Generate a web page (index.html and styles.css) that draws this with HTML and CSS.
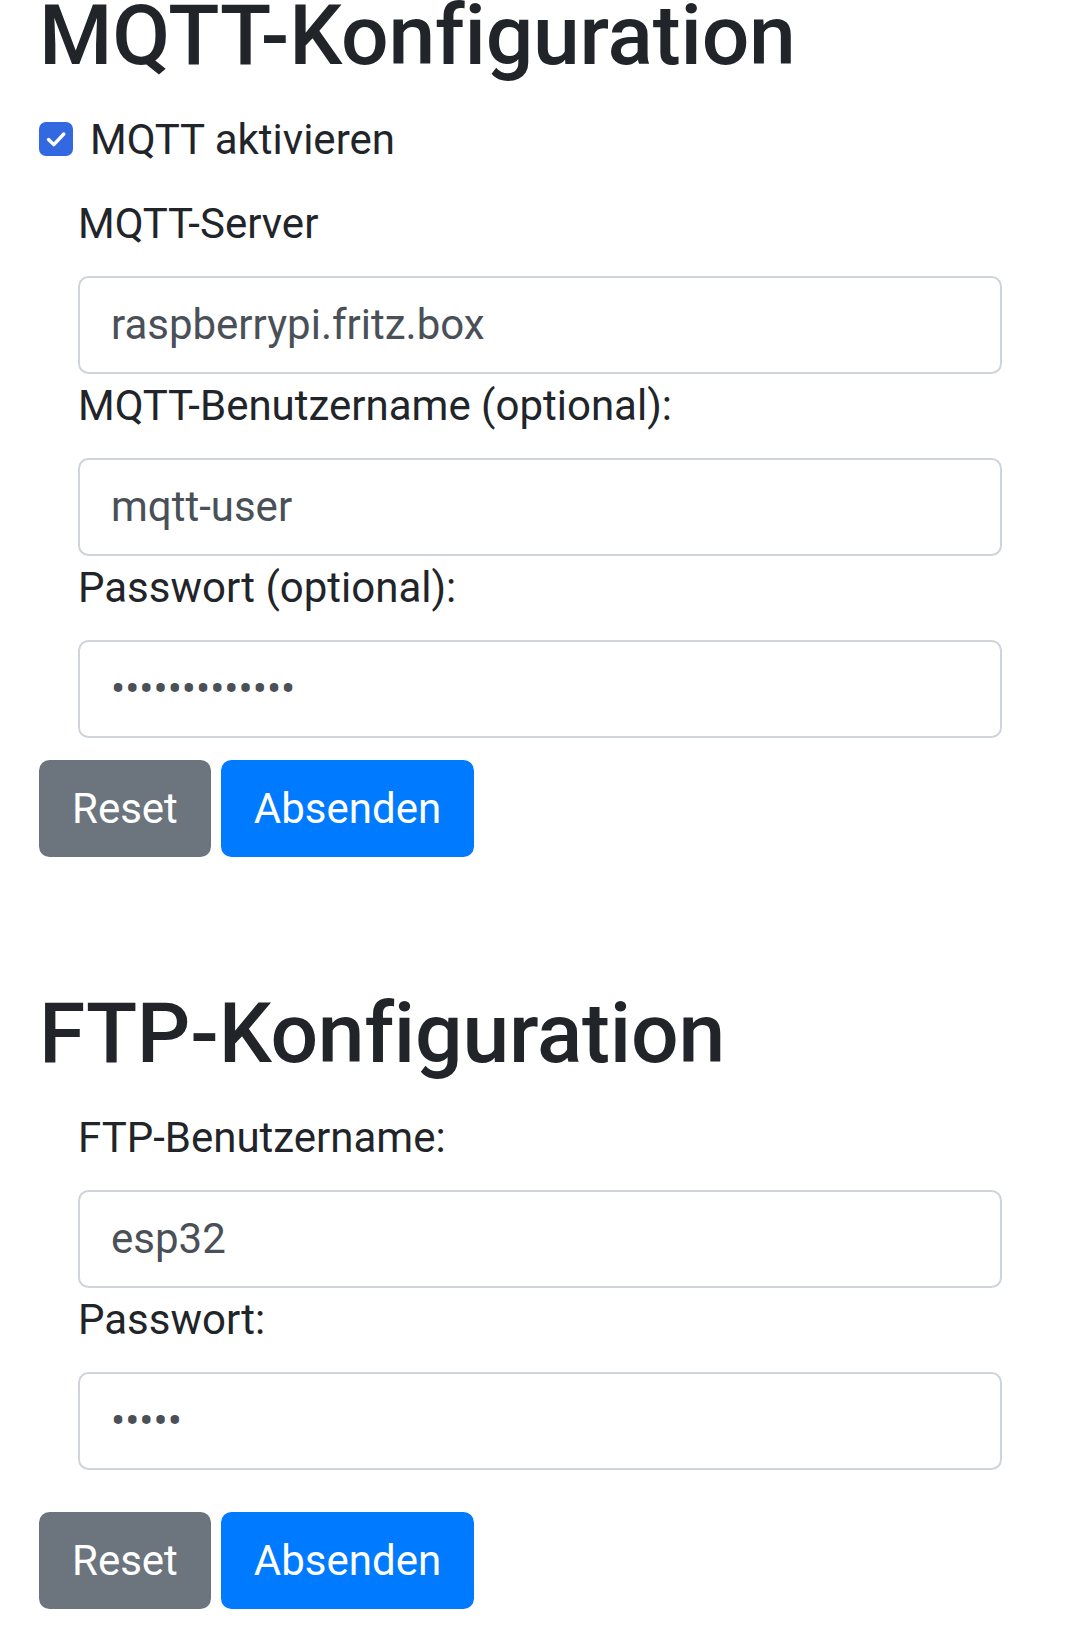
FILE: index.html
```html
<!DOCTYPE html>
<html lang="de">
<head>
<meta charset="utf-8">
<title>Konfiguration</title>
<link rel="stylesheet" href="styles.css">
</head>
<body>
<div class="container">
  <section class="section">
    <h2 class="title">MQTT-Konfiguration</h2>
    <form class="form">
      <label class="check">
        <span class="check-box">
          <svg viewBox="0 0 34 34" width="34" height="34" aria-hidden="true">
            <path d="M9.5 17.5 L14.8 22.6 L24.8 12" fill="none" stroke="#fff" stroke-width="3.4" stroke-linecap="round" stroke-linejoin="round"/>
          </svg>
        </span>
        <span>MQTT aktivieren</span>
      </label>
      <div class="fields">
        <label class="label">MQTT-Server</label>
        <input class="input" type="text" value="raspberrypi.fritz.box">
        <label class="label">MQTT-Benutzername (optional):</label>
        <input class="input" type="text" value="mqtt-user">
        <label class="label">Passwort (optional):</label>
        <input class="input" type="password" value="mqttpasswort1">
      </div>
      <div class="actions">
        <button type="reset" class="btn btn-secondary">Reset</button>
        <button type="submit" class="btn btn-primary">Absenden</button>
      </div>
    </form>
  </section>
  <section class="section section-ftp">
    <h2 class="title">FTP-Konfiguration</h2>
    <form class="form">
      <div class="fields">
        <label class="label">FTP-Benutzername:</label>
        <input class="input" type="text" value="esp32">
        <label class="label">Passwort:</label>
        <input class="input" type="password" value="esp32">
      </div>
      <div class="actions actions-ftp">
        <button type="reset" class="btn btn-secondary">Reset</button>
        <button type="submit" class="btn btn-primary">Absenden</button>
      </div>
    </form>
  </section>
</div>
</body>
</html>
```
FILE: styles.css
```css
html, body {
  margin: 0;
  padding: 0;
  background: #ffffff;
}
body {
  font-family: Roboto, "Noto Sans", Arial, sans-serif;
  font-size: 42px;
  line-height: 1.5;
  color: #212529;
  overflow: hidden;
}
.container {
  padding: 0 39px;
}
.title {
  font-size: 84px;
  font-weight: 500;
  line-height: 1.2;
  margin: -14px 0 21px;
  letter-spacing: -0.2px;
}
.section-ftp .title {
  margin-top: 127px;
}
.form {
  margin: 0;
}
.check {
  display: flex;
  align-items: center;
  height: 63px;
  margin-bottom: 21px;
}
.check-box {
  width: 34px;
  height: 34px;
  border-radius: 7px;
  background: #3369e0;
  margin-right: 17px;
  display: flex;
}
.fields {
  display: flex;
  flex-direction: column;
  padding: 0 39px;
}
.label {
  display: block;
  margin-bottom: 21px;
}
.input {
  box-sizing: border-box;
  display: block;
  width: 100%;
  height: 98px;
  padding: 0 31px;
  font-family: Roboto, "Noto Sans", Arial, sans-serif;
  font-size: 42px;
  color: #495057;
  background: #fff;
  border: 2.6px solid #ced4da;
  border-radius: 10.5px;
  outline: none;
}
.actions {
  display: flex;
  gap: 10px;
  margin-top: 22px;
}
.actions-ftp {
  margin-top: 42px;
}
.btn {
  box-sizing: border-box;
  height: 97px;
  padding: 0 31px;
  font-family: Roboto, "Noto Sans", Arial, sans-serif;
  font-size: 42px;
  font-weight: 400;
  color: #fff;
  border: 2.6px solid transparent;
  border-radius: 10.5px;
}
.btn-secondary {
  background: #6c757d;
  border-color: #6c757d;
}
.btn-primary {
  background: #007bff;
  border-color: #007bff;
}
```
